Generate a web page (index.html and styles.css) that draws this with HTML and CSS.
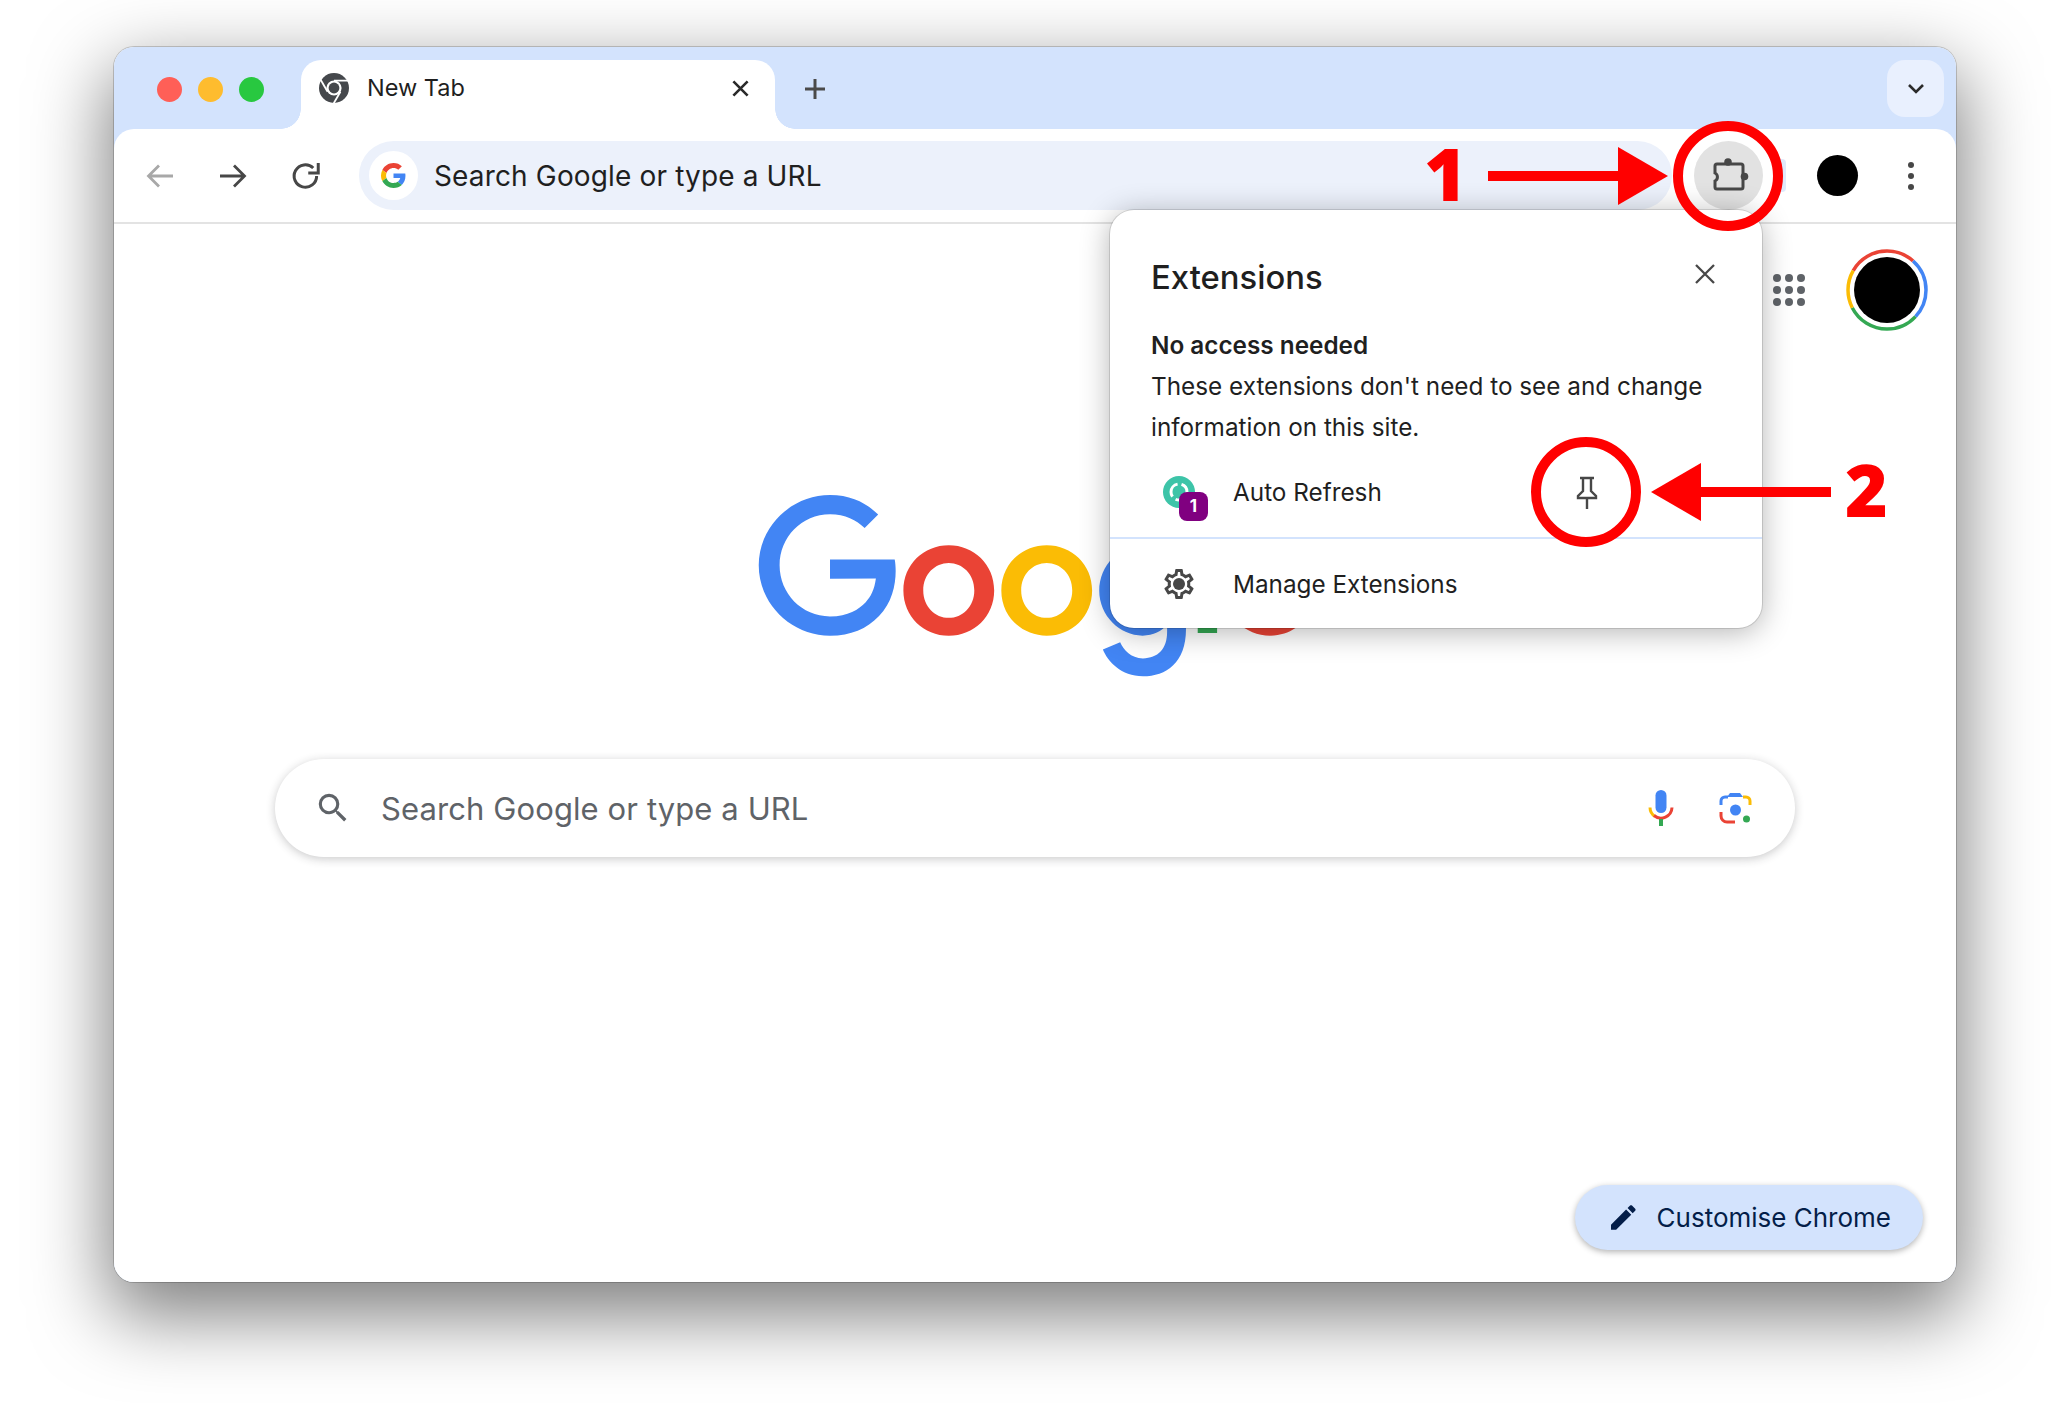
FILE: index.html
```html
<!DOCTYPE html>
<html lang="en">
<head>
    <meta charset="UTF-8">
    <title>New Tab</title>
    <link rel="stylesheet" href="styles.css">
</head>
<body>
    <div class="window">
        <div class="tabstrip">
            <div class="lights">
                <span class="light red"></span>
                <span class="light yellow"></span>
                <span class="light green"></span>
            </div>
            <div class="tab">
                <svg class="favicon" viewBox="0 0 30 30">
                    <circle cx="15" cy="15" r="15" fill="#45484c"/>
                    <circle cx="15" cy="15" r="7.6" fill="#fff"/>
                    <circle cx="15" cy="15" r="5.4" fill="#45484c"/>
                    <g stroke="#fff" stroke-width="1.8">
                        <path d="M15 7.6H30"/>
                        <path d="M15 7.6H30" transform="rotate(120 15 15)"/>
                        <path d="M15 7.6H30" transform="rotate(240 15 15)"/>
                    </g>
                </svg>
                <span class="tab-title">New Tab</span>
                <svg class="tab-close" viewBox="0 0 16 16"><path d="M2 2l12 12M14 2L2 14" stroke="#2b2b2b" stroke-width="2.2" fill="none"/></svg>
            </div>
            <svg class="new-tab" viewBox="0 0 22 22"><path d="M11 1v20M1 11h20" stroke="#4a4a4a" stroke-width="3" fill="none"/></svg>
            <div class="tab-search">
                <svg class="chevron" viewBox="0 0 18 12"><path d="M2 2l7 7 7-7" stroke="#2b2b2b" stroke-width="2.6" fill="none"/></svg>
            </div>
        </div>

        <div class="toolbar">
            <div class="nav-btn">
                <svg class="nav-icon" viewBox="0 0 28 24"><path d="M27 12H3M13 1.500L2.500 12 13 22.500" stroke="#a8a8a8" stroke-width="2.800" fill="none"/></svg>
            </div>
            <div class="nav-btn">
                <svg class="nav-icon" viewBox="0 0 28 24"><path d="M1 12h24M15 1.500L25.500 12 15 22.500" stroke="#474747" stroke-width="2.800" fill="none"/></svg>
            </div>
            <div class="nav-btn">
                <svg class="reload-icon" viewBox="0 0 24 24"><path d="M20.500 12a9 9 0 1 1-2.700-6.400" stroke="#474747" stroke-width="2.400" fill="none"/><path d="M21.800 1.500v8h-8" stroke="#474747" stroke-width="2.400" fill="none"/></svg>
            </div>
            <div class="omnibox">
                <span class="omni-g">
                    <svg class="g-mark" viewBox="0 0 48 48">
                        <path fill="#EA4335" d="M24 9.500c3.540 0 6.710 1.220 9.210 3.600l6.850-6.850C35.900 2.380 30.470 0 24 0 14.620 0 6.510 5.380 2.560 13.220l7.980 6.190C12.430 13.720 17.740 9.500 24 9.500z"/>
                        <path fill="#4285F4" d="M46.980 24.550c0-1.570-.15-3.090-.38-4.550H24v9.020h12.940c-.58 2.960-2.260 5.480-4.780 7.180l7.730 6c4.510-4.180 7.090-10.360 7.090-17.650z"/>
                        <path fill="#FBBC05" d="M10.530 28.590c-.48-1.450-.76-2.990-.76-4.590s.27-3.140.76-4.590l-7.980-6.190C.92 16.460 0 20.120 0 24c0 3.880.92 7.540 2.560 10.780l7.970-6.190z"/>
                        <path fill="#34A853" d="M24 48c6.480 0 11.930-2.130 15.890-5.810l-7.730-6c-2.150 1.450-4.920 2.300-8.160 2.300-6.260 0-11.570-4.220-13.470-9.910l-7.980 6.190C6.510 42.620 14.620 48 24 48z"/>
                    </svg>
                </span>
                <span class="omni-text">Search Google or type a URL</span>
                <svg class="star" viewBox="0 0 24 24"><path fill="#474747" d="M22 9.240l-7.190-.62L12 2 9.190 8.630 2 9.240l5.460 4.730L5.820 21 12 17.270 18.180 21l-1.630-7.030L22 9.240zM12 15.400l-3.760 2.270 1-4.280-3.320-2.880 4.380-.38L12 6.100l1.710 4.040 4.380.38-3.320 2.880 1 4.280L12 15.400z"/></svg>
            </div>
            <div class="ext-btn">
                <svg class="puzzle" viewBox="0 0 40 40">
                    <path d="M8 8h24a2 2 0 0 1 2 2v21a2 2 0 0 1-2 2H8a2 2 0 0 1-2-2v-6a4.500 4.500 0 0 0 0-8v-7a2 2 0 0 1 2-2z" stroke="#474747" stroke-width="3" fill="none"/>
                    <circle cx="19" cy="6" r="3.800" fill="#474747"/>
                    <circle cx="35.500" cy="20.500" r="3.800" fill="#474747"/>
                </svg>
            </div>
            <span class="ext-chip"></span>
            <span class="profile"></span>
            <div class="menu">
                <span class="menu-dot"></span>
                <span class="menu-dot"></span>
                <span class="menu-dot"></span>
            </div>
        </div>

        <div class="ntp">
            <div class="ntp-head">
                <div class="apps">
                    <span></span><span></span><span></span>
                    <span></span><span></span><span></span>
                    <span></span><span></span><span></span>
                </div>
                <svg class="avatar" viewBox="0 0 82 82">
                    <g fill="none" stroke-width="3.500">
                        <circle cx="41" cy="41" r="39" pathLength="360" stroke="#ea4335" stroke-dasharray="102 258" stroke-dashoffset="150"/>
                        <circle cx="41" cy="41" r="39" pathLength="360" stroke="#4285f4" stroke-dasharray="91 269" stroke-dashoffset="48"/>
                        <circle cx="41" cy="41" r="39" pathLength="360" stroke="#34a853" stroke-dasharray="110 250" stroke-dashoffset="-43"/>
                        <circle cx="41" cy="41" r="39" pathLength="360" stroke="#fbbc05" stroke-dasharray="57 303" stroke-dashoffset="-153"/>
                    </g>
                    <circle cx="41" cy="41" r="33" fill="#000"/>
                </svg>
            </div>

            <svg class="logo" viewBox="0 0 272 92">
                <path fill="#EA4335" d="M115.750 47.180c0 12.770-9.990 22.180-22.250 22.180s-22.250-9.410-22.250-22.180C71.250 34.320 81.240 25 93.500 25s22.250 9.320 22.250 22.180zm-9.740 0c0-7.980-5.790-13.440-12.510-13.440S80.990 39.200 80.990 47.180c0 7.900 5.790 13.440 12.510 13.440s12.510-5.550 12.510-13.440z"/>
                <path fill="#FBBC05" d="M163.750 47.180c0 12.770-9.990 22.180-22.250 22.180s-22.250-9.410-22.250-22.180c0-12.850 9.990-22.180 22.250-22.180s22.250 9.320 22.250 22.180zm-9.740 0c0-7.980-5.790-13.440-12.510-13.440s-12.510 5.460-12.510 13.440c0 7.900 5.790 13.440 12.510 13.440s12.510-5.550 12.510-13.440z"/>
                <path fill="#4285F4" d="M209.750 26.340v39.820c0 16.380-9.660 23.070-21.080 23.070-10.750 0-17.220-7.190-19.660-13.070l8.480-3.530c1.510 3.610 5.210 7.870 11.170 7.870 7.310 0 11.840-4.510 11.840-13v-3.190h-.34c-2.180 2.690-6.380 5.040-11.680 5.040-11.090 0-21.250-9.660-21.250-22.090 0-12.520 10.160-22.260 21.250-22.260 5.290 0 9.490 2.350 11.680 4.960h.34v-3.610h9.250zm-8.560 20.920c0-7.810-5.210-13.520-11.840-13.520-6.720 0-12.350 5.710-12.350 13.520 0 7.730 5.630 13.360 12.350 13.360 6.630 0 11.840-5.630 11.840-13.360z"/>
                <path fill="#34A853" d="M225 3v65h-9.500V3h9.500z"/>
                <path fill="#EA4335" d="M262.020 54.480l7.560 5.040c-2.440 3.610-8.320 9.830-18.480 9.830-12.600 0-22.010-9.740-22.010-22.180 0-13.190 9.490-22.180 20.920-22.180 11.510 0 17.140 9.160 18.980 14.110l1.010 2.520-29.650 12.280c2.270 4.450 5.800 6.720 10.750 6.720 4.960 0 8.400-2.440 10.920-6.140zm-23.270-7.980l19.820-8.230c-1.090-2.770-4.370-4.700-8.230-4.700-4.950 0-11.840 4.370-11.590 12.930z"/>
                <path fill="#4285F4" d="M35.290 41.410V32H67c.31 1.640.47 3.580.47 5.680 0 7.060-1.930 15.790-8.150 22.010-6.050 6.300-13.780 9.660-24.020 9.660C16.320 69.350.36 53.890.36 34.910.36 15.930 16.320.47 35.300.47c10.500 0 17.980 4.120 23.600 9.490l-6.640 6.640c-4.030-3.780-9.490-6.720-16.970-6.720-13.860 0-24.700 11.170-24.700 25.030 0 13.860 10.840 25.030 24.700 25.030 8.990 0 14.110-3.610 17.390-6.890 2.660-2.660 4.410-6.460 5.100-11.650l-22.490.01z"/>
            </svg>

            <div class="searchbox">
                <svg class="search-icon" viewBox="0 0 24 24"><path fill="#5f6368" d="M15.500 14h-.79l-.28-.27A6.470 6.470 0 0 0 16 9.500 6.500 6.500 0 1 0 9.500 16c1.610 0 3.090-.59 4.230-1.570l.27.28v.79l5 4.990L20.490 19l-4.990-5zm-6 0C7.010 14 5 11.990 5 9.500S7.010 5 9.500 5 14 7.010 14 9.500 11.990 14 9.500 14z"/></svg>
                <span class="search-text">Search Google or type a URL</span>
                <svg class="mic" viewBox="0 0 26 36">
                    <rect x="7.500" y="0" width="11" height="23" rx="5.500" fill="#4285f4"/>
                    <path d="M2 17.500a11 11 0 0 0 5 9" stroke="#fbbc05" stroke-width="3" fill="none"/>
                    <path d="M6 25.500a11 11 0 0 0 18-8" stroke="#ea4335" stroke-width="3" fill="none"/>
                    <rect x="11" y="29" width="4" height="7" fill="#34a853"/>
                </svg>
                <svg class="lens" viewBox="0 0 33 33">
                    <path d="M2 13V9a4 4 0 0 1 4-4h3" stroke="#4285f4" stroke-width="3" fill="none"/>
                    <path d="M8 5l3-4h10l3 4z" fill="#4285f4"/>
                    <path d="M24 5h3a4 4 0 0 1 4 4v4" stroke="#fbbc05" stroke-width="3" fill="none"/>
                    <path d="M2 20v4a6 6 0 0 0 6 6h8" stroke="#ea4335" stroke-width="3" fill="none"/>
                    <circle cx="16.500" cy="18" r="5.500" fill="#4285f4"/>
                    <circle cx="27.500" cy="27" r="3.500" fill="#34a853"/>
                </svg>
            </div>

            <div class="customise">
                <svg class="pencil" viewBox="3 3 18.300 18"><path fill="#041e49" d="M3 17.250V21h3.750L17.810 9.940l-3.750-3.750L3 17.250zM20.710 7.040c.39-.39.39-1.020 0-1.410l-2.340-2.340c-.39-.39-1.020-.39-1.410 0l-1.830 1.830 3.750 3.750 1.830-1.830z"/></svg>
                <span>Customise Chrome</span>
            </div>
        </div>

        <!-- popup sits over the page and the toolbar edge -->
        <div class="popup">
            <div class="popup-head">
                <span class="popup-title">Extensions</span>
                <svg class="popup-close" viewBox="0 0 22 22"><path d="M2 2l18 18M20 2L2 20" stroke="#474747" stroke-width="2.300" fill="none"/></svg>
            </div>
            <div class="popup-info">
                <div class="info-title">No access needed</div>
                <div>These extensions don't need to see and change</div>
                <div>information on this site.</div>
            </div>
            <div class="ext-row">
                <span class="ext-icon">
                    <svg class="refresh" viewBox="0 0 32 32">
                        <circle cx="16" cy="16" r="16" fill="#3dc4a8"/>
                        <circle cx="16" cy="16" r="8" fill="none" stroke="#fff" stroke-width="3" stroke-dasharray="16 4"/>
                    </svg>
                    <span class="badge">1</span>
                </span>
                <span class="ext-name">Auto Refresh</span>
                <svg class="pin" viewBox="0 0 24 34"><path d="M5 2h14M8 2v13l-5 5v2h18v-2l-5-5V2M12 22v11" stroke="#474747" stroke-width="2.400" fill="none"/></svg>
            </div>
            <div class="manage-row">
                <svg class="gear" viewBox="0 0 24 24">
                    <path fill="#474747" d="M19.430 12.980c.04-.32.07-.64.07-.98 0-.34-.03-.66-.07-.98l2.110-1.650c.19-.15.24-.42.12-.64l-2-3.460c-.09-.16-.26-.25-.44-.25-.06 0-.12.01-.17.03l-2.490 1c-.52-.4-1.080-.73-1.690-.98l-.38-2.650C14.460 2.180 14.250 2 14 2h-4c-.25 0-.46.18-.49.42l-.38 2.650c-.61.25-1.170.59-1.690.98l-2.490-1c-.06-.02-.12-.03-.18-.03-.17 0-.34.09-.43.25l-2 3.460c-.13.22-.07.49.12.64l2.110 1.650c-.04.32-.07.65-.07.98 0 .33.03.66.07.98l-2.110 1.650c-.19.15-.24.42-.12.64l2 3.460c.09.16.26.25.44.25.06 0 .12-.01.17-.03l2.490-1c.52.4 1.080.73 1.690.98l.38 2.650c.03.24.24.42.49.42h4c.25 0 .46-.18.49-.42l.38-2.650c.61-.25 1.170-.59 1.690-.98l2.490 1c.06.02.12.03.18.03.17 0 .34-.09.43-.25l2-3.460c.12-.22.07-.49-.12-.64l-2.110-1.650zm-1.980-1.710c.04.31.05.52.05.73 0 .21-.02.43-.05.73l-.14 1.130.89.7 1.080.84-.7 1.210-1.270-.51-1.040-.42-.9.68c-.43.32-.84.56-1.250.73l-1.060.43-.16 1.130-.2 1.350h-1.400l-.19-1.350-.16-1.130-1.060-.43c-.43-.18-.83-.41-1.230-.71l-.91-.7-1.060.43-1.270.51-.7-1.210 1.080-.84.89-.7-.14-1.130c-.03-.31-.05-.54-.05-.74s.02-.43.05-.73l.14-1.130-.89-.7-1.080-.84.7-1.210 1.270.51 1.040.42.9-.68c.43-.32.84-.56 1.250-.73l1.060-.43.16-1.130.2-1.350h1.390l.19 1.350.16 1.130 1.060.43c.43.18.83.41 1.230.71l.91.7 1.060-.43 1.270-.51.7 1.210-1.070.85-.89.7.14 1.130z"/>
                    <circle cx="12" cy="12" r="4" fill="#474747"/>
                </svg>
                <span class="ext-name">Manage Extensions</span>
            </div>
        </div>
    </div>

    <!-- red callouts drawn on top of the screenshot -->
    <svg class="callouts" viewBox="0 0 2070 1403">
        <g fill="none" stroke="#f00" stroke-width="10">
            <circle cx="1728" cy="176" r="50"/>
            <circle cx="1586" cy="492" r="50"/>
        </g>
        <g fill="#f00">
            <rect x="1488" y="171" width="132" height="10"/>
            <polygon points="1618,147 1668,176 1618,205"/>
            <rect x="1699" y="487" width="132" height="10"/>
            <polygon points="1701,463 1651,492 1701,521"/>
            <text class="callout-num" x="1424" y="201">1</text>
            <text class="callout-num" x="1845" y="517">2</text>
        </g>
    </svg>
</body>
</html>
```

FILE: styles.css
```css
html, body {
    margin: 0;
    height: 100%;
    background: #fff;
    overflow: hidden;
}
body {
    position: relative;
    padding: 47px 0 0 114px;
    box-sizing: border-box;
    font-family: Inter, "Liberation Sans", sans-serif;
    color: #1f1f1f;
}
svg {
    display: block;
    flex: none;
}
.window {
    position: relative;
    display: flex;
    flex-direction: column;
    width: 1842px;
    height: 1235px;
    background: #d3e3fd;
    border-radius: 20px;
    overflow: hidden;
}
body::before {
    content: "";
    position: absolute;
    left: 114px;
    top: 47px;
    width: 1842px;
    height: 1235px;
    border-radius: 20px;
    box-shadow: 0 0 0 1px rgba(0, 0, 0, 0.18), 0 28px 75px 6px rgba(0, 0, 0, 0.5);
}

/* tab strip */
.tabstrip {
    display: flex;
    align-items: flex-start;
    height: 82px;
    flex: none;
    padding-top: 13px;
    box-sizing: border-box;
}
.lights {
    display: flex;
    gap: 16px;
    margin: 17px 0 0 43px;
    width: 144px;
}
.light {
    width: 25px;
    height: 25px;
    border-radius: 50%;
}
.red { background: #ff5f57; }
.yellow { background: #febc2e; }
.green { background: #28c840; }
.tab {
    position: relative;
    display: flex;
    align-items: center;
    width: 474px;
    height: 69px;
    padding: 0 25px 13px 18px;
    box-sizing: border-box;
    background: #fff;
    border-radius: 20px 20px 0 0;
}
.tab::before,
.tab::after {
    content: "";
    position: absolute;
    bottom: 0;
    width: 20px;
    height: 20px;
}
.tab::before {
    left: -20px;
    background: radial-gradient(circle at 0 0, transparent 19.500px, #fff 20px);
}
.tab::after {
    right: -20px;
    background: radial-gradient(circle at 100% 0, transparent 19.500px, #fff 20px);
}
.favicon {
    width: 30px;
    height: 30px;
}
.tab-title {
    margin: 0 0 2px 18px;
    font-size: 23.500px;
    flex: 1;
}
.tab-close {
    width: 19px;
    height: 19px;
}
.new-tab {
    width: 22px;
    height: 22px;
    margin: 18px 0 0 29px;
}
.tab-search {
    display: flex;
    align-items: center;
    justify-content: center;
    width: 57px;
    height: 57px;
    margin-left: auto;
    margin-right: 12px;
    background: #e9f0fe;
    border-radius: 18px;
}
.chevron {
    width: 18px;
    height: 12px;
}

/* toolbar */
.toolbar {
    display: flex;
    align-items: center;
    flex: none;
    height: 95px;
    padding: 0 0 0 9px;
    box-sizing: border-box;
    background: #fff;
    border-radius: 20px 20px 0 0;
    border-bottom: 2px solid #e3e3e3;
}
.nav-btn {
    display: flex;
    justify-content: center;
    width: 73px;
}
.nav-icon {
    width: 28px;
    height: 24px;
}
.reload-icon {
    width: 30px;
    height: 30px;
}
.omnibox {
    display: flex;
    align-items: center;
    width: 1313px;
    height: 69px;
    margin-left: 17px;
    padding: 0 30px 0 10px;
    box-sizing: border-box;
    background: #ecf1fb;
    border-radius: 35px;
}
.omni-g {
    display: flex;
    align-items: center;
    justify-content: center;
    width: 49px;
    height: 49px;
    background: #fff;
    border-radius: 50%;
}
.g-mark {
    width: 25px;
    height: 25px;
}
.omni-text {
    flex: 1;
    margin-left: 16px;
    font-size: 28px;
    letter-spacing: 0.150px;
}
.star {
    width: 30px;
    height: 30px;
    margin-top: 4px;
}
.ext-btn {
    display: flex;
    align-items: center;
    justify-content: center;
    width: 69px;
    height: 69px;
    margin-left: 22px;
    background: #e2e2e2;
    border-radius: 50%;
}
.puzzle {
    width: 40px;
    height: 40px;
}
.ext-chip {
    width: 13px;
    height: 33px;
    margin-left: 10px;
    background: #dfe9fb;
    border-radius: 0 4px 4px 0;
}
.profile {
    width: 41px;
    height: 41px;
    margin-left: 31px;
    background: #000;
    border-radius: 50%;
}
.menu {
    display: flex;
    flex-direction: column;
    gap: 5px;
    margin-left: 50px;
}
.menu-dot {
    width: 6px;
    height: 6px;
    background: #474747;
    border-radius: 50%;
}

/* new tab page */
.ntp {
    flex: 1;
    display: flex;
    flex-direction: column;
    background: #fff;
    min-height: 0;
}
.ntp-head {
    display: flex;
    align-items: center;
    justify-content: flex-end;
    gap: 41px;
    padding: 25px 28px 0 0;
}
.apps {
    display: grid;
    grid-template-columns: repeat(3, 8px);
    gap: 4px;
}
.apps span {
    width: 8px;
    height: 8px;
    background: #5f6368;
    border-radius: 50%;
}
.avatar {
    width: 82px;
    height: 82px;
}
.logo {
    width: 555px;
    height: 188px;
    margin: 163px 0 0 644px;
}
.searchbox {
    display: flex;
    align-items: center;
    width: 1520px;
    height: 98px;
    margin: 77px 0 0 161px;
    padding: 0 43px 0 39px;
    box-sizing: border-box;
    background: #fff;
    border-radius: 49px;
    box-shadow: 0 2px 10px rgba(32, 33, 36, 0.24);
}
.search-icon {
    width: 38px;
    height: 38px;
}
.search-text {
    flex: 1;
    margin-left: 29px;
    font-size: 31px;
    letter-spacing: 0.100px;
    color: #5f6368;
}
.mic {
    width: 26px;
    height: 36px;
}
.lens {
    width: 33px;
    height: 33px;
    margin-left: 45px;
}
.customise {
    display: flex;
    align-items: center;
    gap: 21px;
    align-self: flex-end;
    height: 65px;
    margin: auto 33px 32px 0;
    padding: 0 32px 0 36px;
    background: #d3e3fd;
    border-radius: 33px;
    box-shadow: 0 2px 6px rgba(0, 0, 0, 0.3);
    font-size: 26px;
    color: #041e49;
}
.pencil {
    width: 25px;
    height: 25px;
}

/* extensions popup */
.popup {
    position: absolute;
    left: 996px;
    top: 163px;
    width: 652px;
    height: 418px;
    background: #fff;
    border-radius: 24px;
    box-shadow: 0 0 0 1px rgba(0, 0, 0, 0.12), 0 4px 30px rgba(0, 0, 0, 0.3);
    font-size: 24.300px;
}
.popup-head {
    display: flex;
    align-items: center;
    justify-content: space-between;
    padding: 40px 46px 0 41px;
    box-sizing: border-box;
    height: 94px;
}
.popup-title {
    font-size: 32.800px;
    font-weight: 500;
}
.popup-close {
    width: 22px;
    height: 22px;
    margin-bottom: 6px;
}
.popup-info {
    padding: 21px 30px 0 41px;
    line-height: 41px;
}
.info-title {
    font-weight: 600;
}
.ext-row {
    display: flex;
    align-items: center;
    height: 91px;
    padding: 0 0 2px 53px;
    border-bottom: 2px solid #d3e3fd;
    box-sizing: border-box;
}
.ext-icon {
    position: relative;
    width: 32px;
    height: 32px;
}
.refresh {
    width: 32px;
    height: 32px;
}
.badge {
    position: absolute;
    left: 16px;
    top: 16px;
    width: 29px;
    height: 29px;
    line-height: 29px;
    text-align: center;
    background: #800080;
    border-radius: 8px;
    color: #fff;
    font-size: 17px;
    font-weight: 700;
}
.ext-name {
    margin-left: 38px;
}
.pin {
    width: 24px;
    height: 34px;
    margin: 2px 163px 0 auto;
}
.manage-row {
    display: flex;
    align-items: center;
    padding: 0 0 0 51px;
    height: 90px;
}
.gear {
    width: 36px;
    height: 36px;
}
.manage-row .ext-name {
    margin-left: 36px;
}

/* annotations */
.callouts {
    position: absolute;
    left: 0;
    top: 0;
    width: 2070px;
    height: 1403px;
}
.callout-num {
    font-family: "Open Sans", sans-serif;
    font-weight: 800;
    font-size: 73px;
}
```
